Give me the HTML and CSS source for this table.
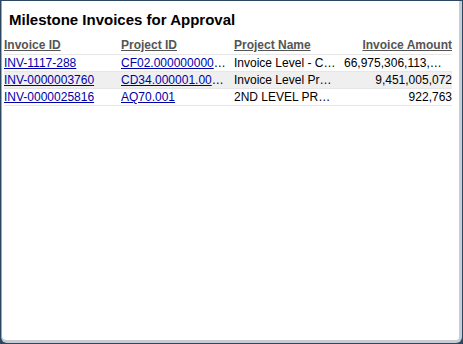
FILE: index.html
```html
<!DOCTYPE html>
<html>
<head>
<meta charset="utf-8">
<link rel="stylesheet" href="styles.css">
</head>
<body>
<div class="panel">
  <div class="inner">
    <h1 class="title">Milestone Invoices for Approval</h1>
    <table class="grid">
      <colgroup>
        <col class="c1"><col class="c2"><col class="c3"><col class="c4">
      </colgroup>
      <thead>
        <tr>
          <th><span>Invoice ID</span></th>
          <th><span>Project ID</span></th>
          <th><span>Project Name</span></th>
          <th class="num"><span>Invoice Amount</span></th>
        </tr>
      </thead>
      <tbody>
        <tr>
          <td><a href="#">INV-1117-288</a></td>
          <td><a href="#">CF02.000000000000001</a></td>
          <td>Invoice Level - Contract</td>
          <td class="num">66,975,306,113,000,000</td>
        </tr>
        <tr class="alt">
          <td><a href="#">INV-0000003760</a></td>
          <td><a href="#">CD34.000001.00001</a></td>
          <td>Invoice Level Project</td>
          <td class="num">9,451,005,072</td>
        </tr>
        <tr>
          <td><a href="#">INV-0000025816</a></td>
          <td><a href="#">AQ70.001</a></td>
          <td>2ND LEVEL PROJECT</td>
          <td class="num">922,763</td>
        </tr>
      </tbody>
    </table>
  </div>
</div>
</body>
</html>
```

FILE: styles.css
```css
html, body {
  margin: 0;
  padding: 0;
  background: #1f3a54;
}
body {
  width: 463px;
  height: 344px;
  font-family: "Liberation Sans", Arial, sans-serif;
}
.panel {
  box-sizing: border-box;
  width: 463px;
  height: 344px;
  background: #2a4863;
  padding: 1px 1px 1px 1px;
}
.inner {
  box-sizing: border-box;
  height: 100%;
  background: #ffffff;
  border-left: 1px solid #9aa8b6;
  border-right: 3px solid #c9cdd2;
  border-bottom: 3px solid #c9cdd2;
  border-radius: 0 0 6px 6px;
  padding: 0 0 0 2px;
}
.title {
  margin: 0;
  padding: 10px 0 0 5px;
  height: 24px;
  font-size: 15px;
  font-weight: bold;
  color: #000;
  line-height: 18px;
}
.grid {
  border-collapse: collapse;
  table-layout: fixed;
  width: 448px;
  margin-top: 2px;
  font-size: 12px;
}
.c1 { width: 117px; }
.c2 { width: 113px; }
.c3 { width: 110px; }
.c4 { width: 108px; }
.grid th {
  text-align: left;
  font-weight: bold;
  color: #555;
  padding: 0;
  height: 17px;
  line-height: 16px;
  vertical-align: top;
  border-bottom: 1px solid #e6e6e6;
  white-space: nowrap;
  overflow: hidden;
}
.grid th span {
  text-decoration: underline;
}
.grid td {
  height: 16px;
  padding: 0 6px 0 0;
  border-bottom: 1px solid #e6e6e6;
  white-space: nowrap;
  overflow: hidden;
  text-overflow: ellipsis;
  color: #000;
  line-height: 16px;
}
.grid td.num {
  text-align: right;
  padding-right: 0;
}
.grid th.num {
  text-align: right;
}
.grid tr:first-child td.num {
  padding-right: 7px;
}
.grid tr.alt td {
  background: #efefef;
}
.grid a {
  color: #0000aa;
  text-decoration: underline;
}
```
